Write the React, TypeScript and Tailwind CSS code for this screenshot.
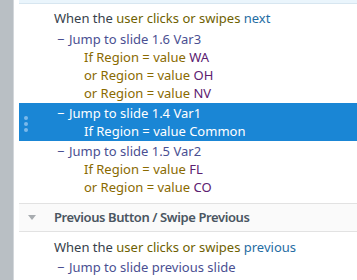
import React from 'react'

type Cond = { lead: 'If' | 'or'; value: string }

type Group = {
  slide: string
  conds: Cond[]
  selected?: boolean
}

const groups: Group[] = [
  {
    slide: '1.6 Var3',
    conds: [
      { lead: 'If', value: 'WA' },
      { lead: 'or', value: 'OH' },
      { lead: 'or', value: 'NV' },
    ],
  },
  {
    slide: '1.4 Var1',
    conds: [{ lead: 'If', value: 'Common' }],
    selected: true,
  },
  {
    slide: '1.5 Var2',
    conds: [
      { lead: 'If', value: 'FL' },
      { lead: 'or', value: 'CO' },
    ],
  },
]

const Trigger = ({ action }: { action: string }) => (
  <div className="h-[18px] pl-[35px] leading-[18px]">
    <span className="text-[#36414b]">When the </span>
    <span className="text-[#6e5f00]">user clicks or swipes </span>
    <span className="text-[#1f6da3]">{action}</span>
  </div>
)

const RuleGroup = ({ group }: { group: Group }) => {
  const sel = group.selected
  return (
    <div className={`relative py-px ${sel ? 'bg-[#1a86d5]' : ''}`}>
      {sel && (
        <div className="absolute left-[5px] top-[13px] flex flex-col gap-[2px]">
          <span className="h-[4px] w-[4px] rounded-full bg-[#7ab9ea]" />
          <span className="h-[4px] w-[4px] rounded-full bg-[#7ab9ea]" />
          <span className="h-[4px] w-[4px] rounded-full bg-[#7ab9ea]" />
        </div>
      )}
      <div
        className={`flex h-[18px] items-center pl-[38px] leading-[18px] ${
          sel ? 'text-white' : 'text-[#4a4f92]'
        }`}
      >
        <span className="w-[12px]">−</span>
        <span>Jump to slide {group.slide}</span>
      </div>
      {group.conds.map((c, i) => (
        <div key={i} className="h-[18px] pl-[65px] leading-[18px]">
          <span className={sel ? 'text-white' : 'text-[#8a6a00]'}>
            {c.lead} Region = value{' '}
          </span>
          <span className={sel ? 'text-white' : 'text-[#5b2070]'}>
            {c.value}
          </span>
        </div>
      ))}
    </div>
  )
}

export default function App() {
  return (
    <div
      className="flex h-[280px] w-[357px] overflow-hidden bg-white text-[13px]"
      style={{ fontFamily: '"Noto Sans", sans-serif' }}
    >
      <div className="w-[14px] shrink-0 border-r border-[#d3d7db] bg-[#b9bfc4]" />
      <div className="w-[5px] shrink-0" />
      <div className="flex-1">
        <div className="h-[4px] border-b border-[#d7e6f0] bg-[#eaf5fc]" />
        <div className="pt-[5px]">
          <Trigger action="next" />
          <div className="mt-[2px] flex flex-col">
            {groups.map((g) => (
              <RuleGroup key={g.slide} group={g} />
            ))}
          </div>
        </div>
        <div className="mt-[6px] flex h-[29px] items-center border-y border-[#e2e2e2] bg-[#fafafa]">
          <svg width="8" height="5" viewBox="0 0 8 5" className="ml-[9px]">
            <path d="M0 0h8L4 5z" fill="#a8acb0" />
          </svg>
          <span className="ml-[18px] font-semibold tracking-[-0.4px] text-[#4a5561]">
            Previous Button / Swipe Previous
          </span>
        </div>
        <div className="pt-[6px]">
          <Trigger action="previous" />
          <div className="mt-[2px] flex h-[18px] items-center pl-[38px] leading-[18px] text-[#4a4f92]">
            <span className="w-[12px]">−</span>
            <span>Jump to slide previous slide</span>
          </div>
        </div>
      </div>
    </div>
  )
}
